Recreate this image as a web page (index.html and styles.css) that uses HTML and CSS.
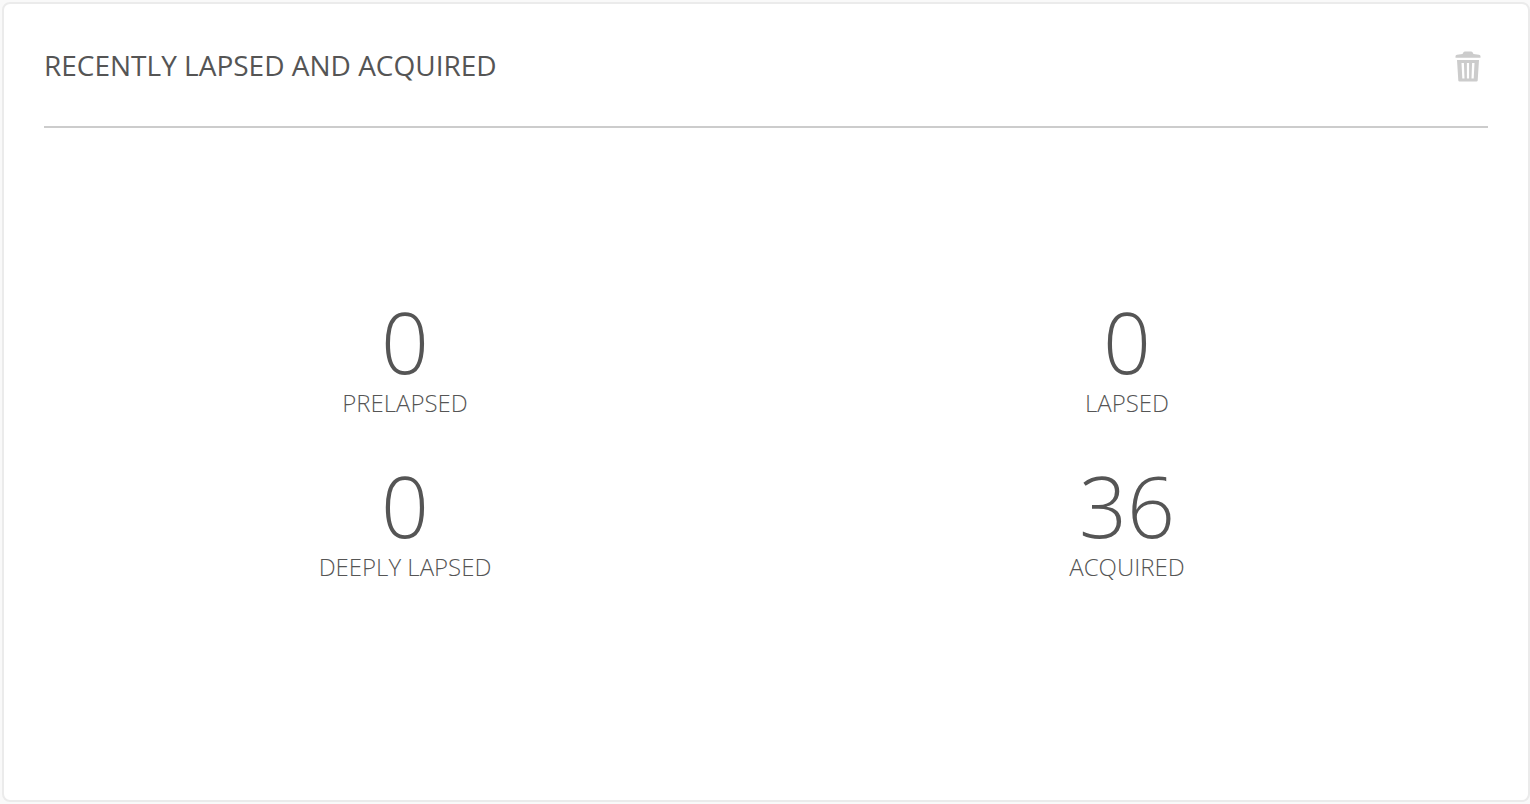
FILE: index.html
```html
<!DOCTYPE html>
<html lang="en">
<head>
<meta charset="utf-8">
<meta name="viewport" content="width=device-width, initial-scale=1">
<title>Recently lapsed and acquired</title>
<link rel="stylesheet" href="styles.css">
</head>
<body>
<section class="card">
  <header class="card-header">
    <h1 class="card-title">RECENTLY LAPSED AND ACQUIRED</h1>
    <button class="delete-button" type="button" aria-label="Delete">
      <svg class="delete-icon" viewBox="0 0 26 34" aria-hidden="true">
        <path fill="currentColor" fill-rule="evenodd" d="M.5 9.700V8.300Q.5 7 2 6.700L7.500 6L8.300 4.500Q8.900 3.500 10 3.500H16Q17.100 3.500 17.700 4.500L18.500 6L24 6.700Q25.500 7 25.500 8.300V9.700ZM2 12H24L22.700 32.400Q22.600 33.500 21.500 33.500H4.500Q3.400 33.500 3.300 32.400ZM6.500 15L7.300 30.500H9.500L8.900 15ZM11.900 15V30.500H14.100V15ZM17.100 15L16.500 30.500H18.700L19.500 15Z"/>
      </svg>
    </button>
  </header>
  <dl class="stats">
    <div class="stat"><dt class="stat-label">PRELAPSED</dt><dd class="stat-value">0</dd></div>
    <div class="stat"><dt class="stat-label">LAPSED</dt><dd class="stat-value">0</dd></div>
    <div class="stat"><dt class="stat-label">DEEPLY LAPSED</dt><dd class="stat-value">0</dd></div>
    <div class="stat"><dt class="stat-label">ACQUIRED</dt><dd class="stat-value">36</dd></div>
  </dl>
</section>
</body>
</html>
```
FILE: styles.css
```css
* { box-sizing: border-box; }

body {
  margin: 0;
  min-height: 100vh;
  display: flex;
  padding: 2px 0 2px 2px;
  background: #f9f9f9;
  color: #555;
  font-family: "Open Sans", sans-serif;
}

.card {
  flex: 1;
  display: flex;
  flex-direction: column;
  padding: 0 40px;
  background: #fff;
  border: 2px solid #ebebeb;
  border-radius: 8px;
}

.card-header {
  display: flex;
  align-items: center;
  justify-content: space-between;
  height: 124px;
  border-bottom: 2px solid #ccc;
}

.card-title {
  margin: 0;
  font-size: 28px;
  font-weight: 400;
  line-height: 40px;
}

.delete-button {
  display: flex;
  padding: 0 7px;
  border: 0;
  background: none;
  color: #ccc;
  cursor: pointer;
}

.delete-icon {
  width: 26px;
  height: 34px;
}

.stats {
  flex: 1;
  display: grid;
  grid-template-columns: 1fr 1fr;
  align-content: center;
  row-gap: 42px;
  margin: 0;
  padding-bottom: 46px;
}

.stat {
  display: flex;
  flex-direction: column-reverse;
  align-items: center;
}

.stat-value {
  margin: 0;
  font-size: 84px;
  font-weight: 300;
  line-height: 88px;
}

.stat-label {
  font-size: 24px;
  font-weight: 300;
  line-height: 34px;
}
```
